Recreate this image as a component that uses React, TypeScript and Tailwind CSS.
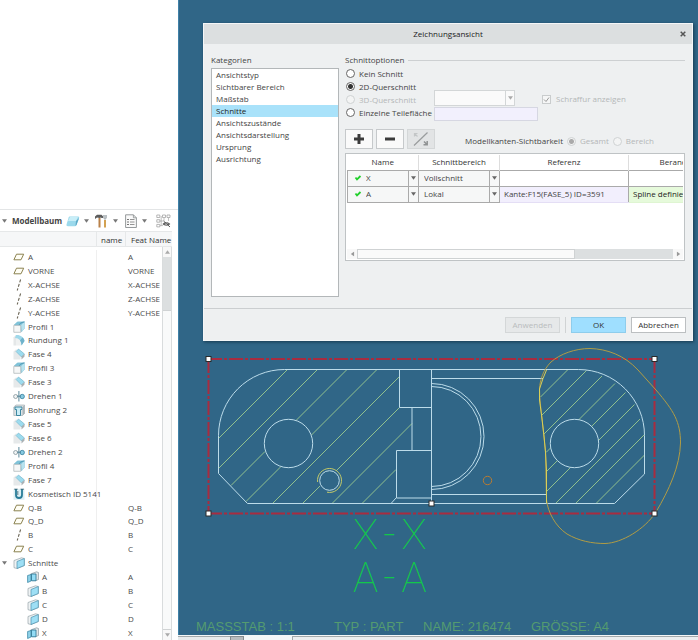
import { useState } from 'react';
import type { ReactNode } from 'react';

type IconKind = 'plane' | 'axis' | 'profile' | 'round' | 'chamfer' | 'revolve' | 'hole' | 'cosmetic' | 'section' | 'sectionPlane';

interface TreeNode {
  icon: IconKind;
  label: string;
  feat?: string;
  level?: number;
  open?: boolean;
}

const treeNodes: TreeNode[] = [
  { icon: 'plane', label: 'A', feat: 'A' },
  { icon: 'plane', label: 'VORNE', feat: 'VORNE' },
  { icon: 'axis', label: 'X-ACHSE', feat: 'X-ACHSE' },
  { icon: 'axis', label: 'Z-ACHSE', feat: 'Z-ACHSE' },
  { icon: 'axis', label: 'Y-ACHSE', feat: 'Y-ACHSE' },
  { icon: 'profile', label: 'Profil 1' },
  { icon: 'round', label: 'Rundung 1' },
  { icon: 'chamfer', label: 'Fase 4' },
  { icon: 'profile', label: 'Profil 3' },
  { icon: 'chamfer', label: 'Fase 3' },
  { icon: 'revolve', label: 'Drehen 1' },
  { icon: 'hole', label: 'Bohrung 2' },
  { icon: 'chamfer', label: 'Fase 5' },
  { icon: 'chamfer', label: 'Fase 6' },
  { icon: 'revolve', label: 'Drehen 2' },
  { icon: 'profile', label: 'Profil 4' },
  { icon: 'chamfer', label: 'Fase 7' },
  { icon: 'cosmetic', label: 'Kosmetisch ID 5141' },
  { icon: 'plane', label: 'Q-B', feat: 'Q-B' },
  { icon: 'plane', label: 'Q_D', feat: 'Q_D' },
  { icon: 'axis', label: 'B', feat: 'B' },
  { icon: 'plane', label: 'C', feat: 'C' },
  { icon: 'section', label: 'Schnitte', open: true },
  { icon: 'sectionPlane', label: 'A', feat: 'A', level: 1 },
  { icon: 'section', label: 'B', feat: 'B', level: 1 },
  { icon: 'section', label: 'C', feat: 'C', level: 1 },
  { icon: 'section', label: 'D', feat: 'D', level: 1 },
  { icon: 'sectionPlane', label: 'X', feat: 'X', level: 1 },
];

const categories = [
  'Ansichtstyp',
  'Sichtbarer Bereich',
  'Maßstab',
  'Schnitte',
  'Ansichtszustände',
  'Ansichtsdarstellung',
  'Ursprung',
  'Ausrichtung',
];

const iconShapes: Record<IconKind, ReactNode> = {
  plane: <path d="M3.5 3.2h7.2L8 8.8H.9z" fill="#fffef5" stroke="#8b8250" />,
  axis: <path d="M7.6 0.5L4.2 11.5" fill="none" stroke="#6d6757" strokeWidth="1.1" strokeDasharray="3 1.6" />,
  profile: (
    <>
      <path d="M1 4L4.500.800h7v6.700L8.500 11z" fill="#6fb4cc" />
      <path d="M1 4L4.500.800h7L8 4z" fill="#7fc3d9" />
      <path d="M8 4l3.500-3.200v6.700L8.500 11z" fill="#b7e3ef" />
      <path d="M6 4.500C6 3 8 1.500 11.500.800" fill="none" stroke="#3f8ba8" strokeWidth=".8" />
      <path d="M.8 4.300h7v7h-7z" fill="#f6f7f7" stroke="#a9b1b4" strokeWidth=".7" />
    </>
  ),
  round: (
    <>
      <path d="M.5 3.500L3 1v10.500H.5z" fill="#e4e7e8" />
      <path d="M3 4h5v7.500H3z" fill="#eff1f1" />
      <path d="M3 1c4-.5 8 2 8.500 6l-3 4.500C8.500 7 6 4 2 4z" fill="#9ed8ea" />
      <path d="M11.500 7l-3 4.500c0-2-.5-4-1.500-5l2.500-3c1 .8 1.800 2 2 3.500z" fill="#6fb2cb" />
    </>
  ),
  chamfer: (
    <>
      <path d="M.5 3.500L3.500 1v3l4 4v3.500h-7z" fill="#e6e9ea" />
      <path d="M3 3.500L5.500 1l6 5-3 3z" fill="#9ddbee" stroke="#5aa4bf" strokeWidth=".5" />
      <path d="M8.500 8.500l3-2.500v2.500l-3 3z" fill="#aab0b3" />
    </>
  ),
  revolve: (
    <>
      <ellipse cx="2.600" cy="6.500" rx="2" ry="2" fill="#f2f4f4" stroke="#83949b" strokeWidth=".8" />
      <ellipse cx="9.200" cy="6.500" rx="2.200" ry="2.200" fill="#86c9e0" stroke="#357f9d" strokeWidth=".8" />
      <path d="M5.900 1v10.500M4 6.200h4" fill="none" stroke="#4b7d92" strokeWidth=".9" />
    </>
  ),
  hole: (
    <>
      <path d="M.8 3L3 1h8.500v8.500l-2 2H.8z" fill="#dde2e4" stroke="#98a4a9" strokeWidth=".6" />
      <path d="M2 3h7v2.500H7.500v6h-4v-6H2z" fill="#c9edf7" stroke="#2d7d99" strokeWidth=".9" />
      <path d="M9.500 3l2-2v8.500l-2 2z" fill="#abb5b9" />
    </>
  ),
  cosmetic: (
    <>
      <path d="M.5.800h11v11H.5z" fill="#dceff4" />
      <path d="M3 1v6c0 4 6 4 6 0V1" fill="none" stroke="#287c98" strokeWidth="1.800" />
      <path d="M1.200 1.200h3.500M7.500 1.200H11M4.800 3v4" fill="none" stroke="#355e6d" strokeWidth=".8" />
    </>
  ),
  section: (
    <>
      <path d="M1 3.500L8.500.800l2.800.700v7L4 11.500l-3-.8z" fill="#eff3f4" stroke="#87959c" strokeWidth=".6" />
      <path d="M4 4.500l7.300-3v7L4 11.500z" fill="#9edff5" stroke="#4a91ad" strokeWidth=".7" />
    </>
  ),
  sectionPlane: (
    <>
      <path d="M3.500 3L9.500.800l2 .7v7l-2.500 1H5z" fill="#dfe5e7" stroke="#7f8d94" strokeWidth=".6" />
      <path d="M.6 4.500L4 3.500v6.500L.6 11.500z" fill="#8fd3ea" stroke="#2f7f9f" strokeWidth=".7" />
      <path d="M4.500 3h4.500v6.800H4.500z" fill="#93dcf5" stroke="#28728f" strokeWidth=".8" />
    </>
  ),
};

function NodeIcon({ kind }: { kind: IconKind }) {
  return (
    <svg viewBox="0 0 12 12" className="h-3 w-3 shrink-0" aria-hidden="true">
      {iconShapes[kind]}
    </svg>
  );
}

function Caret({ className = '' }: { className?: string }) {
  return (
    <svg viewBox="0 0 6 4" className={`h-1 w-[5px] shrink-0 ${className}`} aria-hidden="true">
      <path d="M0 0h6L3 4z" fill="currentColor" />
    </svg>
  );
}

function TreeToolbar() {
  return (
    <div className="flex h-[22px] shrink-0 items-center border-t border-[#e3e5e6] pl-0.5 text-[#777]">
      <button className="flex w-16 items-center gap-[5px] font-bold text-[#444]">
        <Caret className="text-[#777]" />
        Modellbaum
      </button>
      <button className="flex items-center gap-1">
        <svg viewBox="0 0 14 12" className="h-3 w-3.5" aria-hidden="true">
          <path d="M3.500 1.500h8c1.500 0 2 .5 1.500 2L10.500 10c-.5 1-1 1.200-2 1.200H2c-1.300 0-1.800-.7-1.400-2L2.500 3c.2-1 .4-1.400 1-1.500z" fill="#9bd9ec" />
          <path d="M4 2h8L10 6H2z" fill="#c8eef8" />
          <path d="M10 6l3-3-2.500 7-1 1z" fill="#5ea9c6" />
        </svg>
        <Caret />
      </button>
      <button className="ml-1.5 flex items-center gap-1.5">
        <svg viewBox="0 0 12 14" className="h-3.5 w-3" aria-hidden="true">
          <path d="M0 2.500L2 .8h4.500L8 2.300V4H6.500L6 3.500 4.500 4 2 3.500 0 5z" fill="#5c5c5c" />
          <path d="M3.500 4h2v9.500h-2z" fill="#b98149" />
          <path d="M10 1v3.500M8.800 1v3L10 5.500 11.200 4V1" fill="none" stroke="#8e999e" strokeWidth=".9" />
          <path d="M9 6h2v7.500H9z" fill="#d3a252" />
        </svg>
        <Caret />
      </button>
      <button className="ml-[7px] flex items-center gap-[5px]">
        <svg viewBox="0 0 12 14" className="h-3.5 w-3" aria-hidden="true">
          <path d="M.6.800h7.800l3 3v9.700H.6z" fill="#fafafa" stroke="#8a8f91" strokeWidth=".9" />
          <path d="M8.400.800v3h3" fill="none" stroke="#8a8f91" strokeWidth=".8" />
          <path d="M2.200 5.500h1.600M2.200 8h1.600M2.200 10.500h1.600" stroke="#555" strokeWidth="1.100" />
          <path d="M5 5.500h4.500M5 8h4.500M5 10.500h4.500" stroke="#888" strokeWidth=".9" />
        </svg>
        <Caret />
      </button>
      <button className="ml-[9px]">
        <svg viewBox="0 0 15 14" className="h-3.5 w-[15px]" aria-hidden="true">
          <path d="M.8 1h3v2.500h-3zM.8 5.700h3v2.500h-3zM.8 10.400h3v2.500h-3zM6.500 1h3v2.500h-3zM11 1h3v2.500h-3z" fill="#fff" stroke="#999" strokeWidth=".7" />
          <path d="M4 7h3M4 11.600h3M5.200 2v9.600M8 4v3M12.500 4v3" stroke="#999" strokeWidth=".6" />
          <path d="M6.500 10C8 7.700 12.500 7.700 14.300 10 12.500 12.200 8 12.200 6.500 10z" fill="#666" />
          <circle cx="10.400" cy="9.900" r="1.100" fill="#ddd" />
          <path d="M7.500 7l6.500 6" stroke="#444" strokeWidth=".9" />
        </svg>
      </button>
    </div>
  );
}

function ModelTree() {
  return (
    <aside className="flex h-screen min-h-[600px] w-[178px] shrink-0 flex-col bg-white pt-[209px] text-[#4a4a4a]">
      <TreeToolbar />
      <div className="relative min-h-0 flex-1 pr-1.5">
        <table className="h-full w-full table-fixed border-collapse text-left">
          <thead>
            <tr className="h-[19px] align-top text-[#333]">
              <th className="w-24 p-0">
                <div className="h-4 border-y border-[#e6e8e9] bg-[#f6f7f8]" />
              </th>
              <th className="w-[30px] p-0 font-normal">
                <div className="h-4 border border-[#e6e8e9] bg-[#f6f7f8] pl-1 leading-4">name</div>
              </th>
              <th className="p-0 font-normal">
                <div className="h-4 border-y border-[#e6e8e9] bg-[#f6f7f8] pl-[5px] leading-4 whitespace-nowrap">Feat Name</div>
              </th>
            </tr>
          </thead>
          <tbody>
            {treeNodes.map((node, index) => (
              <tr key={index}>
                <td className="border-r border-[#efefef] p-0">
                  <div className={`flex h-3 items-center gap-[3px] whitespace-nowrap ${node.level ? 'pl-[27px]' : node.open ? 'pl-0.5' : 'pl-[13px]'}`}>
                    {node.open && <Caret className="mr-[3px] text-[#777]" />}
                    <NodeIcon kind={node.icon} />
                    {node.label}
                  </div>
                </td>
                <td className="p-0" />
                <td className="p-0 pl-0.5 leading-3">{node.feat}</td>
              </tr>
            ))}
          </tbody>
        </table>
        {/* Scrollbar */}
        <div className="absolute top-4 right-1.5 bottom-0 flex w-2.5 flex-col border-x border-[#d9dcdd] bg-[#dcdfe0] text-[#aaa]">
          <button className="flex h-2.5 items-center justify-center bg-[#f8f8f8]">
            <Caret className="rotate-180" />
          </button>
          <div className="h-[53px] shrink-0" />
          <div className="flex-1 border-y border-[#d0d3d4] bg-[#f9fafa]" />
          <button className="flex h-2.5 items-center justify-center bg-[#f8f8f8]">
            <Caret />
          </button>
        </div>
      </div>
    </aside>
  );
}

const leftHatch =
  'M219 438L287.500 369.500M219 468L317.500 369.500M231 485.500L265 451.500M296 420.500L347 369.500M246 501.500L280.500 467M311.500 435L377 369.500M272.500 503.500L399.500 376.500M302.500 503.500L320 486M336 471L399.500 407.500M332 503.500L412 423.500M362 503.500L396 469.500';
const rightHatch =
  'M540.500 397L568 369.500M541.500 415.500L586.500 370.500M544 434L602 376M546 452.500L550.500 448M578.500 420L615 383.500M546.500 471.500L557.500 460.500M591 427L625.500 392.500M546.500 491.500L570.500 467.500M598 441L634.500 404.500M555.500 503.500L640 419M575.500 503.500L644.500 434.500M596 503.500L644.500 455';

const handles = [
  [208.5, 359],
  [654.5, 359],
  [208.5, 513.5],
  [654.5, 513.5],
  [431.5, 503.5],
];

function Drawing() {
  return (
    <svg viewBox="179 0 519 635" preserveAspectRatio="xMinYMin meet" className="absolute inset-0 h-full w-full" fill="none">
      <g stroke="#8fc08e">
        <path d={leftHatch} />
        <path d={rightHatch} />
      </g>
      {/* Part outline */}
      <g stroke="#bcdcea">
        <path d="M284.500 369.500H578.500A66 66 0 0 1 644.500 435.500V474L614.500 503.500H247.500L218.500 473.500V435.500A66 66 0 0 1 284.500 369.500z" />
        <circle cx="288.500" cy="443.500" r="24.200" />
        <circle cx="574.500" cy="443.500" r="24.200" />
        <circle cx="329.500" cy="480.500" r="9.800" />
        <path d="M399.500 369.500V407.500H431.500M412 407.500V450.500M431.500 450.500H396.500V498H431.500M396 498L391 503.500M431.500 369.500V503.500" />
        <path d="M431.500 378.500H543M431.500 494.500H546.500" />
        <path d="M431.500 383.500A52.500 53 0 0 1 431.500 489.500M431.500 386.500A49.500 50 0 0 1 431.500 486.500" />
      </g>
      <path d="M317.600 482A12 12 0 1 1 327 492.200" stroke="#c3ca68" />
      <circle cx="487.500" cy="480.500" r="4.200" stroke="#b87b32" />
      {/* View frame */}
      <g stroke="#a82c40" strokeWidth="2" strokeDasharray="14 2 3 2">
        <line x1="208" y1="359" x2="655" y2="359" />
        <line x1="208" y1="513.500" x2="655" y2="513.500" />
        <line x1="208.500" y1="359" x2="208.500" y2="514" />
        <line x1="654.500" y1="359" x2="654.500" y2="514" />
      </g>
      {/* Spline that bounds the local section */}
      <path
        d="M590 348.500C575 348.500 560 354 551 362C543 370 540 380 539.500 389C539.500 398 541 410 542 418L545.500 452L546.500 500C548 512 555 526 567 534C579 541 592 543.500 605 543.500C622 543 645 529 656 512C669 490 680 466 680.500 443C680.500 422 674 411 656 390L638 370C624 355 607 349 590 348.500z"
        stroke="#b09c45"
      />
      <path d="M546.500 370L543 378.500L539.500 389V400L541.500 415L544 436L545.500 452L546.500 470V503" stroke="#d9cf57" />
      {handles.map(([x, y]) => (
        <rect key={`${x}-${y}`} x={x - 2.5} y={y - 2.5} width="5" height="5" fill="#fff" stroke="#2a2a2a" />
      ))}
      <g className="fill-[#12c84a] text-[42px] font-thin [font-family:Roboto,sans-serif]" textAnchor="middle">
        <text x="365.500" y="549">X</text>
        <text x="389.500" y="549">-</text>
        <text x="414" y="549">X</text>
        <text x="365.500" y="592">A</text>
        <text x="389.500" y="592">-</text>
        <text x="414" y="592">A</text>
      </g>
      <g className="fill-[#549b70] text-[13px] [font-family:'Liberation_Sans',sans-serif]">
        <text x="196" y="631">MASSSTAB : 1:1</text>
        <text x="334" y="631">TYP : PART</text>
        <text x="423" y="631">NAME: 216474</text>
        <text x="531" y="631">GRÖSSE: A4</text>
      </g>
    </svg>
  );
}

interface RadioProps {
  name: string;
  label: string;
  checked?: boolean;
  disabled?: boolean;
  onSelect?: () => void;
}

function Radio({ name, label, checked = false, disabled = false, onSelect }: RadioProps) {
  return (
    <label className={`flex h-[13px] items-center gap-1 whitespace-nowrap ${disabled ? 'text-[#b4b7b8]' : ''}`}>
      <input
        type="radio"
        name={name}
        checked={checked}
        disabled={disabled}
        onChange={onSelect}
        className="h-[9px] w-[9px] shrink-0 appearance-none rounded-full border border-[#666] bg-white checked:bg-[radial-gradient(circle,#333_0_2px,#fff_3px)] disabled:border-[#cfd2d3] disabled:bg-[#f3f4f4] disabled:checked:bg-[radial-gradient(circle,#aaa_0_2px,#f3f4f4_3px)]"
      />
      {label}
    </label>
  );
}

function CellSelect({ value, labelledBy }: { value: string; labelledBy: string }) {
  return (
    <div className="relative flex flex-1 items-center self-stretch">
      <select aria-labelledby={labelledBy} className="w-full appearance-none bg-transparent">
        <option>{value}</option>
      </select>
      <span className="pointer-events-none absolute inset-y-0 right-0 flex w-2.5 items-center justify-center border-l border-[#aaa] text-[#666]">
        <Caret />
      </span>
    </div>
  );
}

function CheckMark() {
  return (
    <svg viewBox="0 0 8 8" className="h-2 w-2 shrink-0" aria-hidden="true">
      <path d="M1.500 3.500L3 5.500 6.500 2" fill="none" stroke="#22d02c" strokeWidth="1.800" />
    </svg>
  );
}

const sections = [
  { name: 'X', area: 'Vollschnitt', reference: '', boundary: '' },
  { name: 'A', area: 'Lokal', reference: 'Kante:F15(FASE_5) ID=3591', boundary: 'Spline definiert' },
];

function SectionTable() {
  return (
    <div className="flex h-[108px] flex-col border border-[#bfc3c5] bg-white p-px">
      <div className="flex-1 overflow-hidden">
        <table className="w-[385px] table-fixed border-collapse text-left">
          <thead>
            <tr className="h-[15px] text-center text-[#333]">
              <th id="col-name" className="w-[71px] border-r border-[#ddd] p-0 font-normal">Name</th>
              <th id="col-area" className="w-[81px] border-r border-[#ddd] p-0 font-normal">Schnittbereich</th>
              <th className="w-[129px] border-r border-[#ddd] p-0 font-normal">Referenz</th>
              <th className="p-0 font-normal">Berandung</th>
            </tr>
          </thead>
          <tbody>
            {sections.map((row) => (
              <tr key={row.name} className="h-4 border-y border-[#aaa]">
                <td className="border border-[#aaa] bg-[#f6f7f7] p-0">
                  <div className="flex h-[15px] items-center gap-1 pl-1.5">
                    <CheckMark />
                    <CellSelect value={row.name} labelledBy="col-name" />
                  </div>
                </td>
                <td className="border border-[#aaa] bg-[#f6f7f7] p-0">
                  <div className="flex h-[15px] items-center pl-[5px]">
                    <CellSelect value={row.area} labelledBy="col-area" />
                  </div>
                </td>
                <td className={`border border-[#aaa] p-0 pl-1 ${row.reference ? 'border-b-[#e4def5] bg-[#f2effd]' : ''}`}>{row.reference}</td>
                <td className={`border border-[#aaa] p-0 pl-1 text-[#222] ${row.boundary ? 'border-b-[#dff5d2] bg-[#e6fadb]' : ''}`}>{row.boundary}</td>
              </tr>
            ))}
          </tbody>
        </table>
      </div>
      {/* Scrollbar */}
      <div className="flex h-2.5 bg-[#dcdfe0] text-[#999]">
        <button className="flex w-2.5 items-center justify-center bg-[#f8f8f8]">
          <Caret className="rotate-90" />
        </button>
        <div className="w-[65%] border border-[#cfd2d3] bg-[#fafafa]" />
        <div className="flex-1" />
        <button className="flex w-2.5 items-center justify-center bg-[#f8f8f8]">
          <Caret className="-rotate-90" />
        </button>
      </div>
    </div>
  );
}

function ViewDialog() {
  const [category, setCategory] = useState('Schnitte');
  const [mode, setMode] = useState('2d');

  return (
    <section className="absolute top-[23px] right-[5px] left-6 flex h-[318px] flex-col border border-[#f4f6f7] bg-[#eef0f1] text-[#444] shadow-[1px_1px_3px_#173a50]">
      <header className="flex h-5 shrink-0 items-center bg-[#dcdfe0] pr-1.5 text-[#222]">
        <h1 className="flex-1 pl-3 text-center">Zeichnungsansicht</h1>
        <button>
          <svg viewBox="0 0 6 6" className="h-1.5 w-1.5" aria-hidden="true">
            <path d="M.7.700l4.600 4.600M5.300.700L.7 5.300" stroke="#555" strokeWidth="1.500" />
          </svg>
        </button>
      </header>

      <div className="flex min-h-0 flex-1 gap-1.5 px-[7px] pt-2.5">
        <div className="w-32 shrink-0">
          <h2 className="h-3.5 leading-3">Kategorien</h2>
          <ul className="h-[229px] border border-[#b3b7b9] bg-white">
            {categories.map((item) => (
              <li key={item}>
                <button
                  onClick={() => setCategory(item)}
                  className={`block h-3 w-full pl-1 text-left leading-3 ${item === category ? 'bg-[#a9e2fa] text-[#222]' : ''}`}
                >
                  {item}
                </button>
              </li>
            ))}
          </ul>
        </div>

        <div className="min-w-0 flex-1">
          <h2 className="flex h-3 items-center gap-1 leading-3">
            Schnittoptionen
            <span className="h-px flex-1 bg-[#cdd0d2]" />
          </h2>
          <div className="flex items-start">
            <div className="w-[89px] shrink-0 pt-px pl-px">
              <Radio name="mode" label="Kein Schnitt" checked={mode === 'none'} onSelect={() => setMode('none')} />
              <Radio name="mode" label="2D-Querschnitt" checked={mode === '2d'} onSelect={() => setMode('2d')} />
              <Radio name="mode" label="3D-Querschnitt" disabled />
              <Radio name="mode" label="Einzelne Teilefläche" checked={mode === 'face'} onSelect={() => setMode('face')} />
            </div>
            <div className="flex w-[104px] shrink-0 flex-col gap-px pt-6">
              <div className="relative w-[81px]">
                <select disabled aria-label="3D-Querschnitt" className="block h-4 w-full appearance-none border border-[#d3d6d7] bg-[#fafafa]" />
                <span className="pointer-events-none absolute inset-y-0 right-0 flex w-2.5 items-center justify-center border-l border-[#d3d6d7] text-[#aaa]">
                  <Caret />
                </span>
              </div>
              <input type="text" aria-label="Einzelne Teilefläche" className="h-3.5 w-full border border-[#d6d7e2] bg-[#f2f0fd] px-1" />
            </div>
            <label className="mt-[27px] ml-1 flex items-center gap-[5px] whitespace-nowrap text-[#b4b7b8]">
              <span className="relative flex">
                <input type="checkbox" defaultChecked disabled className="h-[9px] w-[9px] appearance-none border border-[#c9cccd] bg-[#f5f6f6]" />
                <svg viewBox="0 0 9 9" className="pointer-events-none absolute inset-0 h-[9px] w-[9px]" aria-hidden="true">
                  <path d="M2 4.500L4 6.500 7 2.500" fill="none" stroke="#999" />
                </svg>
              </span>
              Schraffur anzeigen
            </label>
          </div>

          <div className="mt-2 mb-1 flex items-center gap-[3px]">
            <button className="flex h-5 w-7 items-center justify-center border border-[#c6c9cb] bg-[#fafafa]">
              <svg viewBox="0 0 10 10" className="h-2.5 w-2.5" aria-hidden="true">
                <path d="M5 0v10M0 5h10" stroke="#3c3c3c" strokeWidth="3" />
              </svg>
            </button>
            <button className="flex h-5 w-7 items-center justify-center border border-[#c6c9cb] bg-[#fafafa]">
              <svg viewBox="0 0 10 10" className="h-2.5 w-2.5" aria-hidden="true">
                <path d="M0 5h10" stroke="#3c3c3c" strokeWidth="3" />
              </svg>
            </button>
            <button disabled className="flex h-5 w-7 items-center justify-center border border-[#d4d7d8] bg-[#e2e4e5]">
              <svg viewBox="0 0 16 14" className="h-3.5 w-4" fill="none" aria-hidden="true">
                <path d="M1 13.500L14.500.500" stroke="#999c9d" strokeWidth="1.200" />
                <path d="M4.500 4.500L1.500 1.500M1.500 4.500v-3h3" stroke="#c3c6c7" strokeWidth="1.200" />
                <path d="M11 9.500l3 3M14.200 9v3.700h-3.700" stroke="#8f9293" strokeWidth="1.500" />
              </svg>
            </button>
            <div className="flex items-center gap-1 pt-1 pl-[27px] whitespace-nowrap">
              <span>Modellkanten-Sichtbarkeit</span>
              <Radio name="visibility" label="Gesamt" checked disabled />
              <Radio name="visibility" label="Bereich" disabled />
            </div>
          </div>

          <SectionTable />
        </div>
      </div>

      <footer className="flex h-8 shrink-0 items-center justify-end gap-[5px] border-t border-[#cbced0] pr-1.5">
        <button disabled className="h-4 w-[55px] border border-[#d4d7d8] bg-[#e6e8e9] text-[#b9bcbd]">
          Anwenden
        </button>
        <span className="h-4 w-px bg-[#d0d3d4]" />
        <button className="h-4 w-[55px] border border-[#8ecdec] bg-[#9fdfff] text-[#333]">OK</button>
        <button className="h-4 w-[55px] border border-[#bcbfc1] bg-white text-[#333]">Abbrechen</button>
      </footer>
    </section>
  );
}

export default function App() {
  return (
    <div className="flex h-screen min-h-[600px] overflow-hidden bg-white text-[8px] leading-3 [font-family:'Open_Sans','Noto_Sans',sans-serif]">
      <ModelTree />
      <main className="flex min-w-0 flex-1 flex-col">
        <div className="relative flex-1 overflow-hidden border-l border-[#3f81a8] bg-[#306687]">
          <Drawing />
          <ViewDialog />
        </div>
        {/* Status bar */}
        <div className="flex h-[5px] shrink-0 items-end bg-[#f4f7f8]">
          <div className="h-1 w-[52px] border-t border-[#a4a9ab] bg-[#e8ebec]" />
          <div className="h-1 w-3.5 border border-b-0 border-[#888d90] bg-[#b9bdbf]" />
          <div className="h-1 w-12" />
          <div className="h-1 flex-1 border-t border-l border-[#a4a9ab] bg-[#eceeef]" />
        </div>
      </main>
    </div>
  );
}
